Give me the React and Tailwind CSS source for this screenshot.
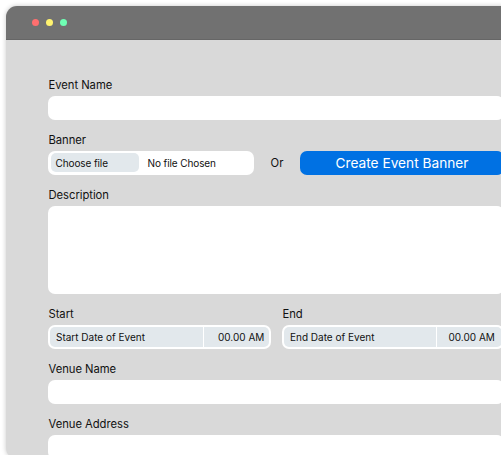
function Label({ children }) {
  return (
    <div className="h-[22px] whitespace-nowrap pl-[0.5px] text-[11.25px] leading-[22px] tracking-[-0.04px] text-[#111111]">{children}</div>
  );
}

function TextField({ label, tall }) {
  return (
    <div>
      <Label>{label}</Label>
      <div className={tall ? "h-[88px] rounded-[7px] bg-white" : "h-6 rounded-[7px] bg-white"} />
    </div>
  );
}

function DateField({ label, text, dateWidth, timePadding, className }) {
  return (
    <div className={className}>
      <Label>{label}</Label>
      <div className="flex h-6 gap-px rounded-[7px] bg-white p-[2px] text-[10px] leading-5 whitespace-nowrap text-[#111111]">
        <div className={`${dateWidth} shrink-0 rounded-l-[5px] bg-[#e2e8ec] pl-[6px]`}>{text}</div>
        <div className={`${timePadding} flex-1 rounded-r-[5px] bg-[#e2e8ec]`}>00.00 AM</div>
      </div>
    </div>
  );
}

export default function App() {
  return (
    <div className="h-[455px] w-[501px] overflow-hidden bg-white pt-[6px] pl-[6px] font-['Inter',sans-serif]">
      <div className="h-[453px] w-[540px] overflow-hidden rounded-[11px] bg-[#d9d9d9] shadow-[0_0_5px_rgba(0,0,0,0.22)]">
        <div className="flex h-[34px] items-center gap-[7px] border-b border-[#666666] bg-[#717171] pl-[25.5px]">
          <span className="size-[7px] rounded-full bg-[#ff6f6f]" />
          <span className="size-[7px] rounded-full bg-[#fff36f]" />
          <span className="size-[7px] rounded-full bg-[#6fffb4]" />
        </div>
        <div className="flex w-[498px] flex-col gap-[9px] pt-[34px] pl-[42px]">
          <TextField label="Event Name" />
          <div>
            <Label>Banner</Label>
            <div className="flex h-6 items-center text-[#111111]">
              <div className="flex h-6 w-[206px] shrink-0 rounded-[7px] bg-white px-[3px] py-[2px] text-[10px] leading-5 tracking-[-0.1px] whitespace-nowrap">
                <div className="h-[19px] w-[88px] rounded-[5px] bg-[#e2e8ec] pl-[4.5px]">Choose file</div>
                <div className="pl-[8.5px]">No file Chosen</div>
              </div>
              <div className="w-[46px] shrink-0 text-center text-[11.25px]">Or</div>
              <div className="h-6 flex-1 rounded-[7px] bg-[#0071e3] text-center text-[13.7px] leading-6 whitespace-nowrap text-white">
                Create Event Banner
              </div>
            </div>
          </div>
          <TextField label="Description" tall />
          <div className="flex gap-[11px]">
            <DateField label="Start" text="Start Date of Event" dateWidth="w-[153px]" timePadding="pl-[14px]" className="w-[223px] shrink-0" />
            <DateField label="End" text="End Date of Event" dateWidth="w-[152px]" timePadding="pl-[11.5px]" className="w-[222px] shrink-0" />
          </div>
          <TextField label="Venue Name" />
          <TextField label="Venue Address" />
        </div>
      </div>
    </div>
  );
}
